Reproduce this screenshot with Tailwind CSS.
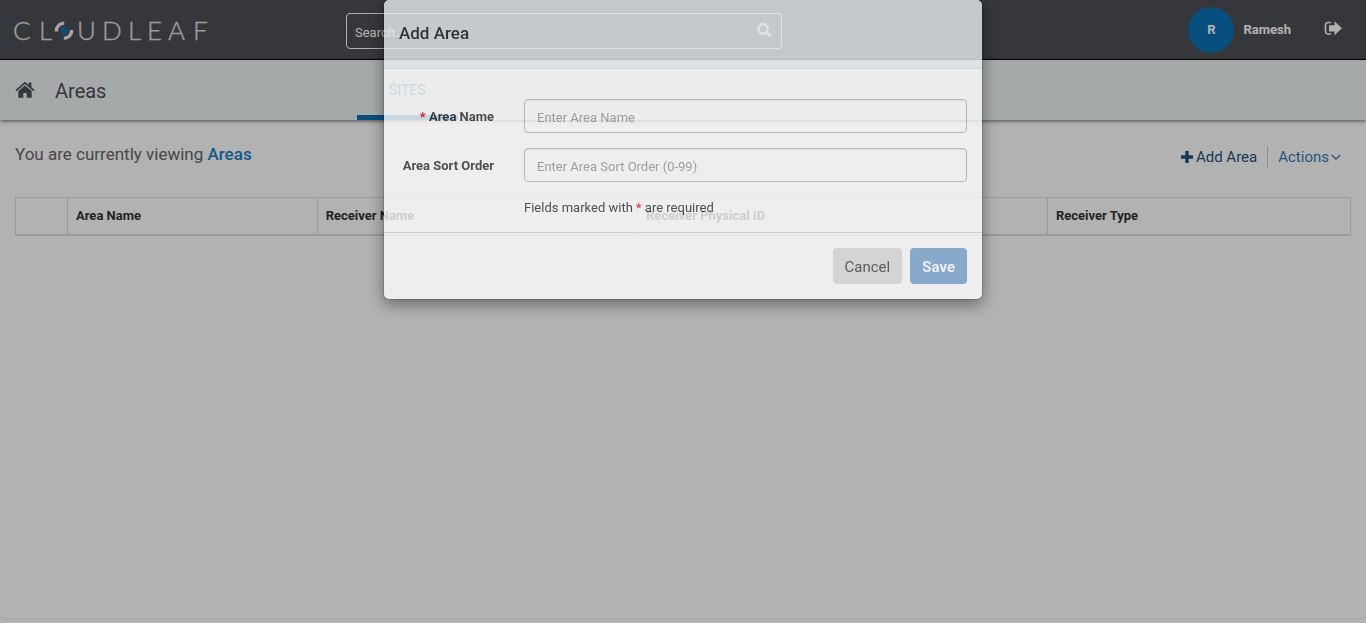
<!DOCTYPE html>
<html lang="en">
<head>
<meta charset="utf-8">
<meta name="viewport" content="width=device-width, initial-scale=1">
<title>Areas - Cloudleaf</title>
<script src="https://cdn.jsdelivr.net/npm/@tailwindcss/browser@4"></script>
</head>
<body class="min-h-screen flex flex-col bg-white font-['Roboto',sans-serif] text-[13px] text-[#333]">

<header class="flex h-[60px] items-center border-b border-black bg-[#4d4f54] pl-3 pr-6 pt-[2px] text-white">
  <a href="#" aria-label="Cloudleaf" class="w-[334px] shrink-0">
    <svg width="202" height="36" viewBox="-3 -4 202 36" fill="none">
      <g fill="#e0e0e0" stroke="#e0e0e0" stroke-width=".3" font-family="Lato, sans-serif" font-weight="300" font-size="26">
        <text y="23" x="-2 24">CL</text>
        <text y="23" x="62 87 113 132 153 178">UDLEAF</text>
      </g>
      <path d="M41.300 14.500a8 8 0 0 1 7.900-8.400" stroke="#ededed" stroke-width="3.400"/>
      <path d="M56.700 13a8 8 0 0 1-7.900 8.400" stroke="#ededed" stroke-width="3.400"/>
      <circle cx="49" cy="13.700" r="3.400" fill="#0b72b5"/>
    </svg>
  </a>
  <form class="flex h-9 w-[436px] items-center rounded border border-white pl-2 pr-[9px]">
    <input type="text" aria-label="Search" placeholder="Search..." class="min-w-0 flex-1 bg-transparent pt-1 text-[13px] outline-none placeholder:text-white">
    <button type="button" aria-label="Search"><svg width="15" height="15" viewBox="0 0 15 15" fill="none" stroke="#fff"><circle cx="6" cy="6" r="4.700" stroke-width="2.400"/><path d="M9.500 9.500l4.300 4.300" stroke-width="2.800"/></svg></button>
  </form>
  <div class="ml-auto flex items-center pb-[2px] font-bold">
    <span class="flex size-[46px] items-center justify-center rounded-full bg-[#0b72b5]">R</span>
    <span class="ml-[9px]">Ramesh</span>
    <button type="button" aria-label="Log out" class="ml-[33px] pb-[3px]"><svg width="18" height="15" viewBox="0 0 18 15"><path d="M7 1.500H4A2.500 2.500 0 0 0 1.500 4v6.500A2.500 2.500 0 0 0 4 13h3" fill="none" stroke="#fff" stroke-width="1.600"/><path d="M5 4.200h5.500V.3L17.900 7.300 10.500 14.300V10.400H5z" fill="#fff"/></svg></button>
  </div>
</header>

<nav class="relative flex h-[60px] items-center bg-[#edf3f4] pl-[15px] shadow-[0_1px_4px_rgba(0,0,0,0.6)]">
  <a href="#" aria-label="Home"><svg width="20" height="18" viewBox="0 0 20 18" fill="#4d4f54"><path d="M10 .8L.4 9l1.100 1.200L10 3.100l8.500 7.100L19.600 9l-3.200-2.800V1.400h-2.700v2.500z"/><path d="M10 4.400L3.300 10v6.800h5V12h3.400v4.800h5V10z"/></svg></a>
  <h1 class="ml-5 w-[302px] pt-[2px] text-[20px] text-[#4d4f54]">Areas</h1>
  <a href="#" class="flex h-full items-center border-b-[5px] border-[#0b72b5] px-8 pt-[6px] text-[14px] text-[#0b72b5]">SITES</a>
</nav>

<main class="mb-1 flex-1 rounded-b border-b border-[#f0f0f0] px-[15px] pt-[22px]">
  <div class="flex items-center justify-between pr-[10px]">
    <p class="pb-[2px] text-[17px] text-[#666]">You are currently viewing <a href="#" class="font-medium text-[#1e7fc8]">Areas</a></p>
    <div class="flex items-center pt-[2px] text-[15px]">
      <button type="button" class="flex items-center gap-[2px] text-[#23527c]"><svg width="14" height="14" viewBox="0 0 14 14" fill="currentColor"><path d="M5.300 1h3.400v4.300H13v3.400H8.700V13H5.300V8.700H1V5.300h4.300z"/></svg>Add Area</button>
      <button type="button" class="ml-[10px] flex items-center gap-[2px] border-l border-[#ccc] pl-[10px] text-[#337ab7]">Actions<svg width="10" height="8" viewBox="0 0 10 8" fill="none" stroke="currentColor" stroke-width="1.300"><path d="M.8 2l4.200 4 4.200-4"/></svg></button>
    </div>
  </div>
  <table class="mt-[27px] w-full table-fixed border-collapse text-left text-[#333]">
    <colgroup><col class="w-[52px]"><col class="w-[18.7%]"><col class="w-[24%]"><col class="w-[30.7%]"><col></colgroup>
    <thead><tr class="h-[38px]">
      <th class="border border-b-2 border-[#ddd]"></th>
      <th class="border border-b-2 border-[#ddd] px-2">Area Name</th>
      <th class="border border-b-2 border-[#ddd] px-2">Receiver Name</th>
      <th class="border border-b-2 border-[#ddd] px-2">Receiver Physical ID</th>
      <th class="border border-b-2 border-[#ddd] px-2">Receiver Type</th>
    </tr></thead>
  </table>
</main>

<!-- Dialog layer -->
<div class="fixed inset-0 bg-black/30"></div>
<div class="fixed inset-x-0 -top-px flex justify-center">
  <section role="dialog" aria-labelledby="dlg-title" class="w-[600px] rounded-md border border-black/20 bg-white bg-clip-padding opacity-78 shadow-[0_5px_15px_rgba(0,0,0,0.5)]">
    <h2 id="dlg-title" class="flex h-[69px] items-center rounded-t-md border-b border-[#e0e4e6] bg-[#edf2f5] px-[15px] text-[17px] font-medium">Add Area</h2>
    <form>
      <div class="grid grid-cols-[110px_1fr] items-center gap-x-[30px] gap-y-[15px] pb-[14px] pr-[15px] pt-[30px]">
        <label for="area-name" class="pt-[2px] text-right font-bold"><span class="text-[#f00]">*</span> Area Name</label>
        <input id="area-name" type="text" placeholder="Enter Area Name" class="h-[34px] w-full rounded border border-[#bbb] px-3 pt-[2px] shadow-[inset_0_1px_1px_rgba(0,0,0,0.08)] placeholder:text-[#999]">
        <label for="area-order" class="pt-[2px] text-right font-bold">Area Sort Order</label>
        <input id="area-order" type="text" placeholder="Enter Area Sort Order (0-99)" class="h-[34px] w-full rounded border border-[#bbb] px-3 pt-[2px] shadow-[inset_0_1px_1px_rgba(0,0,0,0.08)] placeholder:text-[#999]">
        <p class="col-start-2 pt-px leading-5">Fields marked with <span class="text-[#f00]">*</span> are required</p>
      </div>
      <div class="flex justify-end gap-2 border-t border-[#d5d5d5] p-[15px] text-[15px]">
        <button type="button" class="h-9 rounded bg-[#dedede] px-3 pt-[2px] text-[#444]">Cancel</button>
        <button type="submit" class="h-9 rounded bg-[#7ba7d2] px-3 pt-[2px] font-bold text-white">Save</button>
      </div>
    </form>
  </section>
</div>
</body>
</html>
